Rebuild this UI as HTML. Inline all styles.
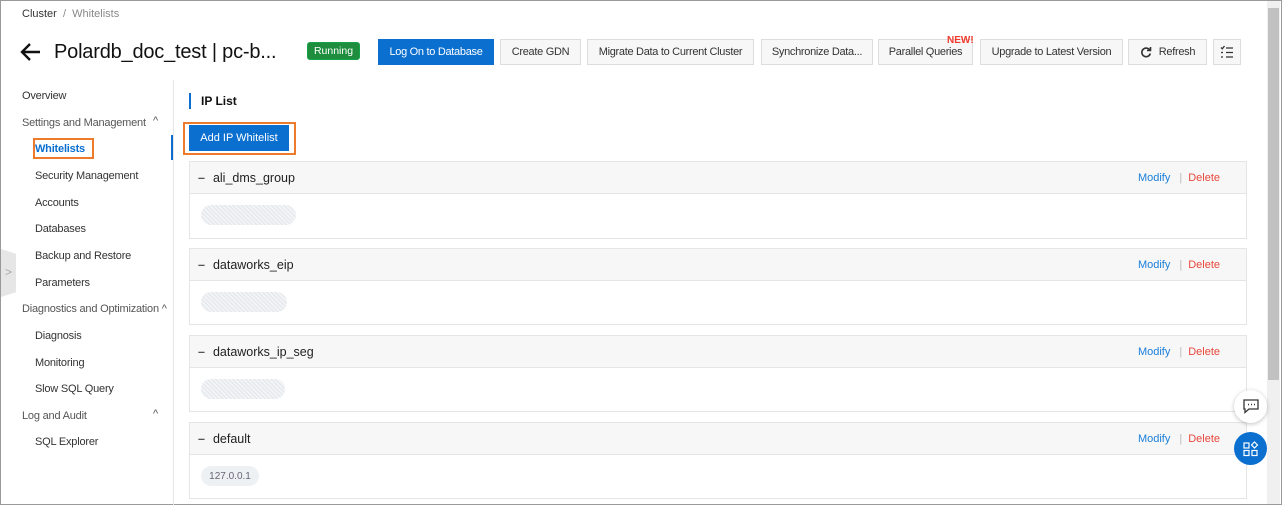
<!DOCTYPE html>
<html><head><style>
*{box-sizing:border-box;margin:0;padding:0}
body{width:1282px;height:505px;overflow:hidden;background:#fff;font-family:"Liberation Sans",sans-serif;color:#333;position:relative}
.a{position:absolute}
.frame{left:0;top:0;width:1282px;height:505px;border:1px solid #999;}
.btn{position:absolute;top:39px;height:26px;border:1px solid #ddd;background:#f7f7f7;font-size:11px;color:#333;display:flex;align-items:center;justify-content:center;letter-spacing:-0.3px}
.nav{position:absolute;font-size:11px;color:#333;letter-spacing:-0.2px}
.panel{position:absolute;left:189px;width:1058px;border:1px solid #e5e5e5}
.ph{height:32px;background:#f7f7f7;border-bottom:1px solid #e5e5e5;display:flex;align-items:center;padding-left:8px;font-size:12.5px;color:#222}
.ph .m{color:#555;margin-right:8px;font-weight:bold}
.act{position:absolute;right:26px;font-size:11px}
.pill{position:absolute;left:11px;top:12px;height:20px;border-radius:10px;background:#eef0f3;background-image:repeating-linear-gradient(45deg,#e3e6ea 0 1px,#f2f4f6 1px 3px)}
</style></head><body>
<div class="a frame"></div>
<div class="a" style="left:22px;top:8px;font-size:11px;color:#333">Cluster <span style="color:#888">&nbsp;/&nbsp; Whitelists</span></div>
<svg class="a" style="left:20px;top:42px" width="22" height="20" viewBox="0 0 22 20"><path d="M20 10H3M10 2L2 10l8 8" fill="none" stroke="#111" stroke-width="2.4"/></svg>
<div class="a" style="left:54px;top:41px;font-size:20px;color:#111;letter-spacing:-0.2px">Polardb_doc_test | pc-b...</div>
<div class="a" style="left:307px;top:42px;width:53px;height:18px;background:#1e8e3e;border:1px solid #17a34a;border-radius:3px;color:#fff;font-size:10.5px;display:flex;align-items:center;justify-content:center">Running</div>
<div class="btn" style="left:378px;width:116px;background:#0a6fcf;border-color:#0a6fcf;color:#fff">Log On to Database</div>
<div class="btn" style="left:500px;width:81px">Create GDN</div>
<div class="btn" style="left:587px;width:167px">Migrate Data to Current Cluster</div>
<div class="btn" style="left:761px;width:112px">Synchronize Data...</div>
<div class="btn" style="left:878px;width:95px">Parallel Queries</div>
<div class="a" style="left:947px;top:35px;font-size:10px;font-weight:bold;color:#f03a2e">NEW!</div>
<div class="btn" style="left:980px;width:143px">Upgrade to Latest Version</div>
<div class="btn" style="left:1128px;width:79px"><svg width="12" height="12" viewBox="0 0 12 12" style="margin-right:7px"><path d="M10 4.5A4.3 4.3 0 1 0 10.3 7.5" fill="none" stroke="#333" stroke-width="1.6"/><path d="M7 4.5h3.5V1" fill="none" stroke="#333" stroke-width="1.6"/></svg>Refresh</div>
<div class="btn" style="left:1213px;width:28px"><svg width="14" height="14" viewBox="0 0 14 14"><path d="M1 2.5l1.3 1.3L4.5 1M6 3h7M1 7.5h2M6 7.5h7M1 12h2M6 12h7" fill="none" stroke="#333" stroke-width="1.3"/></svg></div>

<div class="a" style="left:173px;top:80px;width:1px;height:425px;background:#e5e5e5"></div>
<div class="a" style="left:171px;top:135px;width:2px;height:25px;background:#0a6fcf"></div>
<div class="nav" style="left:22px;top:90px">Overview</div>
<div class="nav" style="left:22px;top:117px;color:#555">Settings and Management</div>
<div class="nav" style="left:153px;top:115px;color:#555">^</div>
<div class="a" style="left:33px;top:138px;width:61px;height:21px;border:2px solid #ee7b2c"></div>
<div class="nav" style="left:35px;top:143px;color:#0a6fcf;font-weight:bold">Whitelists</div>
<div class="nav" style="left:35px;top:170px">Security Management</div>
<div class="nav" style="left:35px;top:197px">Accounts</div>
<div class="nav" style="left:35px;top:223px">Databases</div>
<div class="nav" style="left:35px;top:250px">Backup and Restore</div>
<div class="nav" style="left:35px;top:277px">Parameters</div>
<div class="nav" style="left:22px;top:303px;color:#555">Diagnostics and Optimization ^</div>
<div class="nav" style="left:35px;top:330px">Diagnosis</div>
<div class="nav" style="left:35px;top:357px">Monitoring</div>
<div class="nav" style="left:35px;top:383px">Slow SQL Query</div>
<div class="nav" style="left:22px;top:410px;color:#555">Log and Audit</div>
<div class="nav" style="left:153px;top:408px;color:#555">^</div>
<div class="nav" style="left:35px;top:436px">SQL Explorer</div>
<div class="a" style="left:1px;top:249px;width:15px;height:48px;background:#e6e6e6;clip-path:polygon(0 0,100% 10%,100% 90%,0 100%)"></div>
<div class="a" style="left:5px;top:265px;font-size:12px;color:#aaa">&gt;</div>

<div class="a" style="left:189px;top:93px;width:2px;height:16px;background:#0a6fcf"></div>
<div class="a" style="left:201px;top:94px;font-size:12px;font-weight:bold;color:#111">IP List</div>
<div class="a" style="left:183px;top:122px;width:113px;height:33px;border:2px solid #ee7b2c"></div>
<div class="a" style="left:189px;top:125px;width:100px;height:26px;background:#0a6fcf;color:#fff;font-size:11px;display:flex;align-items:center;justify-content:center">Add IP Whitelist</div>

<div class="panel" style="top:161px;height:78px"><div class="ph"><span class="m">–</span>ali_dms_group</div><div class="act" style="top:10px"><span style="color:#1a7fd9">Modify</span><span style="color:#bbb;margin:0 6px 0 9px">|</span><span style="color:#e8473c">Delete</span></div><div class="pill" style="top:43px;width:95px"></div></div>
<div class="panel" style="top:248px;height:77px"><div class="ph"><span class="m">–</span>dataworks_eip</div><div class="act" style="top:10px"><span style="color:#1a7fd9">Modify</span><span style="color:#bbb;margin:0 6px 0 9px">|</span><span style="color:#e8473c">Delete</span></div><div class="pill" style="top:43px;width:86px"></div></div>
<div class="panel" style="top:335px;height:77px"><div class="ph"><span class="m">–</span>dataworks_ip_seg</div><div class="act" style="top:10px"><span style="color:#1a7fd9">Modify</span><span style="color:#bbb;margin:0 6px 0 9px">|</span><span style="color:#e8473c">Delete</span></div><div class="pill" style="top:43px;width:84px"></div></div>
<div class="panel" style="top:422px;height:77px"><div class="ph"><span class="m">–</span>default</div><div class="act" style="top:10px"><span style="color:#1a7fd9">Modify</span><span style="color:#bbb;margin:0 6px 0 9px">|</span><span style="color:#e8473c">Delete</span></div><div class="pill" style="top:43px;width:58px;background:#eef1f4;font-size:10px;color:#667;display:flex;align-items:center;justify-content:center">127.0.0.1</div></div>

<div class="a" style="left:1267px;top:1px;width:13px;height:503px;background:#f0f0f0"></div>
<div class="a" style="left:1268px;top:8px;width:11px;height:372px;background:#c1c1c1"></div>
<div class="a" style="left:1234px;top:390px;width:33px;height:33px;border-radius:50%;background:#fff;box-shadow:0 1px 4px rgba(0,0,0,.25);display:flex;align-items:center;justify-content:center"><svg width="16" height="15" viewBox="0 0 16 15"><path d="M1 1h14v9H6l-4 3.5V10H1z" fill="none" stroke="#333" stroke-width="1.3"/><path d="M5 5.5h1M8 5.5h1M11 5.5h1" stroke="#333" stroke-width="1.5"/></svg></div>
<div class="a" style="left:1234px;top:432px;width:33px;height:33px;border-radius:50%;background:#0a6fcf;display:flex;align-items:center;justify-content:center"><svg width="16" height="16" viewBox="0 0 16 16" fill="none" stroke="#fff" stroke-width="1.2"><rect x="1" y="2" width="5" height="5"/><rect x="1" y="9.5" width="5" height="5"/><rect x="9" y="9.5" width="5" height="5"/><path d="M11.5 1l3 3-3 3-3-3z"/></svg></div>
</body></html>
